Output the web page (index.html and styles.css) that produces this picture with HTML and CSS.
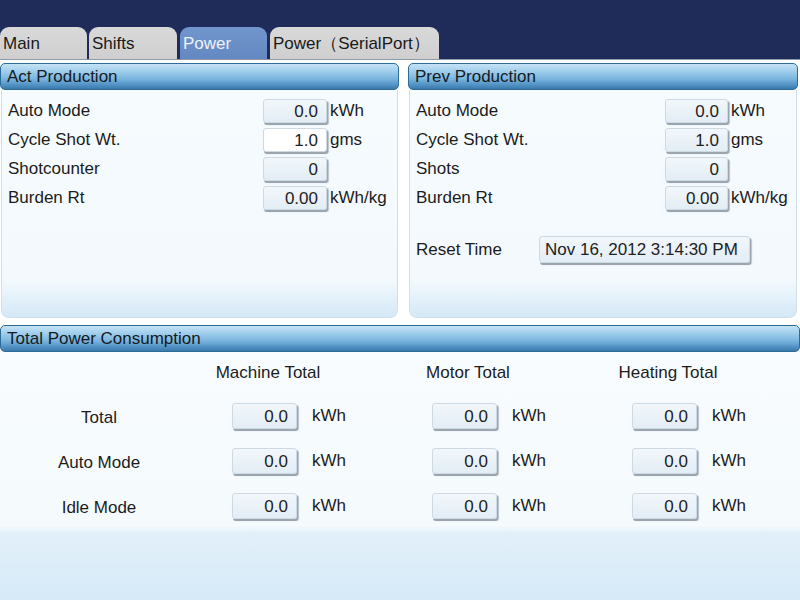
FILE: index.html
```html
<!DOCTYPE html>
<html>
<head>
<meta charset="utf-8">
<link rel="stylesheet" href="styles.css">
</head>
<body>
<div class="screen">
  <div class="topbar">
    <div class="tab tab-main">Main</div>
    <div class="tab tab-shifts">Shifts</div>
    <div class="tab tab-power active">Power</div>
    <div class="tab tab-serial">Power（SerialPort）</div>
  </div>
  <div class="content">
    <div class="top-panels">
      <section class="panel">
        <div class="panel-header">Act Production</div>
        <div class="panel-body">
          <div class="field-grid">
            <div class="label">Auto Mode</div><div class="box">0.0</div><div class="unit">kWh</div>
            <div class="label">Cycle Shot Wt.</div><div class="box box-white">1.0</div><div class="unit">gms</div>
            <div class="label">Shotcounter</div><div class="box">0</div><div class="unit"></div>
            <div class="label">Burden Rt</div><div class="box">0.00</div><div class="unit">kWh/kg</div>
          </div>
        </div>
      </section>
      <section class="panel">
        <div class="panel-header">Prev Production</div>
        <div class="panel-body">
          <div class="field-grid field-grid-prev">
            <div class="label">Auto Mode</div><div class="box">0.0</div><div class="unit">kWh</div>
            <div class="label">Cycle Shot Wt.</div><div class="box">1.0</div><div class="unit">gms</div>
            <div class="label">Shots</div><div class="box">0</div><div class="unit"></div>
            <div class="label">Burden Rt</div><div class="box">0.00</div><div class="unit">kWh/kg</div>
          </div>
          <div class="reset-row">
            <div class="reset-label">Reset Time</div>
            <div class="box box-date">Nov 16, 2012 3:14:30 PM</div>
          </div>
        </div>
      </section>
    </div>
    <section class="panel panel-wide">
      <div class="panel-header">Total Power Consumption</div>
      <div class="panel-body total-body">
        <div class="total-grid">
          <div></div>
          <div class="col-head">Machine Total</div>
          <div class="col-head">Motor Total</div>
          <div class="col-head">Heating Total</div>

          <div class="row-label">Total</div>
          <div class="cell"><div class="box box-big">0.0</div><span class="unit">kWh</span></div>
          <div class="cell"><div class="box box-big">0.0</div><span class="unit">kWh</span></div>
          <div class="cell"><div class="box box-big">0.0</div><span class="unit">kWh</span></div>

          <div class="row-label">Auto Mode</div>
          <div class="cell"><div class="box box-big">0.0</div><span class="unit">kWh</span></div>
          <div class="cell"><div class="box box-big">0.0</div><span class="unit">kWh</span></div>
          <div class="cell"><div class="box box-big">0.0</div><span class="unit">kWh</span></div>

          <div class="row-label">Idle Mode</div>
          <div class="cell"><div class="box box-big">0.0</div><span class="unit">kWh</span></div>
          <div class="cell"><div class="box box-big">0.0</div><span class="unit">kWh</span></div>
          <div class="cell"><div class="box box-big">0.0</div><span class="unit">kWh</span></div>
        </div>
      </div>
    </section>
  </div>
</div>
</body>
</html>
```

FILE: styles.css
```css
* { box-sizing: border-box; }
html, body {
  margin: 0;
  padding: 0;
  width: 800px;
  height: 600px;
  overflow: hidden;
  background: #ffffff;
  font-family: "Liberation Sans", Arial, sans-serif;
  font-size: 17px;
  color: #1c1c1c;
}
.screen {
  width: 800px;
  height: 600px;
  display: flex;
  flex-direction: column;
}
.topbar {
  height: 60px;
  background: #1f2c5a;
  display: flex;
  align-items: flex-end;
  border-bottom: 1px solid #8f9aa6;
}
.tab {
  height: 32px;
  background: linear-gradient(#d9d9d9, #cfcfcf);
  border-radius: 9px 9px 0 0;
  padding: 6px 0 0 3px;
  line-height: 22px;
  color: #1a1a1a;
  white-space: nowrap;
}
.tab-main { width: 87px; margin-right: 2px; }
.tab-shifts { width: 88px; margin-right: 3px; }
.tab-power { width: 87px; margin-right: 3px; }
.tab-serial { width: 169px; }
.tab.active {
  background: linear-gradient(#7196cd, #6489c2);
  color: #eef3fb;
}
.content {
  flex: 1;
  display: flex;
  flex-direction: column;
  padding-top: 3px;
  gap: 7px;
}
.top-panels {
  display: grid;
  grid-template-columns: 399px 390px;
  column-gap: 9px;
  height: 255px;
}
.panel {
  display: flex;
  flex-direction: column;
}
.panel-header {
  height: 27px;
  line-height: 25px;
  padding-left: 6px;
  border: 1px solid #2e6c98;
  border-radius: 5px;
  background: linear-gradient(#c6e3f5 0%, #9fcdec 30%, #79b4de 60%, #4f8fc2 85%, #3a7bae 100%);
  color: #151a22;
  white-space: nowrap;
}
.panel-body {
  flex: 1;
  margin: 0 1px;
  border: 1px solid #cfe0ec;
  border-top: none;
  border-radius: 0 0 8px 8px;
  background: linear-gradient(#f6fbfe 0%, #f3f9fd 84%, #d3e8f6 100%);
}
.field-grid {
  display: grid;
  grid-template-columns: 255px 64px auto;
  grid-auto-rows: 29px;
  align-items: center;
  padding: 6px 0 0 6px;
}
.field-grid-prev {
  grid-template-columns: 249px 63px auto;
}
.label { white-space: nowrap; }
.box {
  height: 24px;
  line-height: 23px;
  text-align: right;
  padding-right: 8px;
  border: 1px solid #cdd9e3;
  border-radius: 3px;
  background: linear-gradient(#f2f7fb, #e3edf5);
  box-shadow: 1px 2px 0 #9aa5ae, 2px 2px 1px #b9c2ca;
  color: #222;
  white-space: nowrap;
}
.box-white { background: #ffffff; }
.unit {
  padding-left: 3px;
  white-space: nowrap;
}
.reset-row {
  display: flex;
  align-items: center;
  margin-top: 24px;
  padding-left: 6px;
}
.reset-label { width: 123px; }
.box-date {
  width: 211px;
  height: 27px;
  line-height: 25px;
  text-align: left;
  padding-left: 5px;
}
.panel-wide {
  flex: 1;
}
.total-body {
  margin: 0;
  border: none;
  border-radius: 0;
  background: linear-gradient(#f8fcfe 0%, #f5fafd 70%, #e2f0fa 73%, #d6eaf8 100%);
}
.total-grid {
  display: grid;
  grid-template-columns: 200px 200px 200px 200px;
  grid-template-rows: 41px 45px 45px 45px;
  align-items: center;
}
.col-head {
  width: 136px;
  text-align: center;
  white-space: nowrap;
}
.row-label {
  text-align: center;
  padding-top: 5px;
  padding-right: 2px;
}
.cell {
  display: flex;
  align-items: center;
  padding-left: 32px;
}
.box-big {
  width: 65px;
  height: 26px;
  line-height: 25px;
}
.cell .unit {
  padding-left: 15px;
}
```
